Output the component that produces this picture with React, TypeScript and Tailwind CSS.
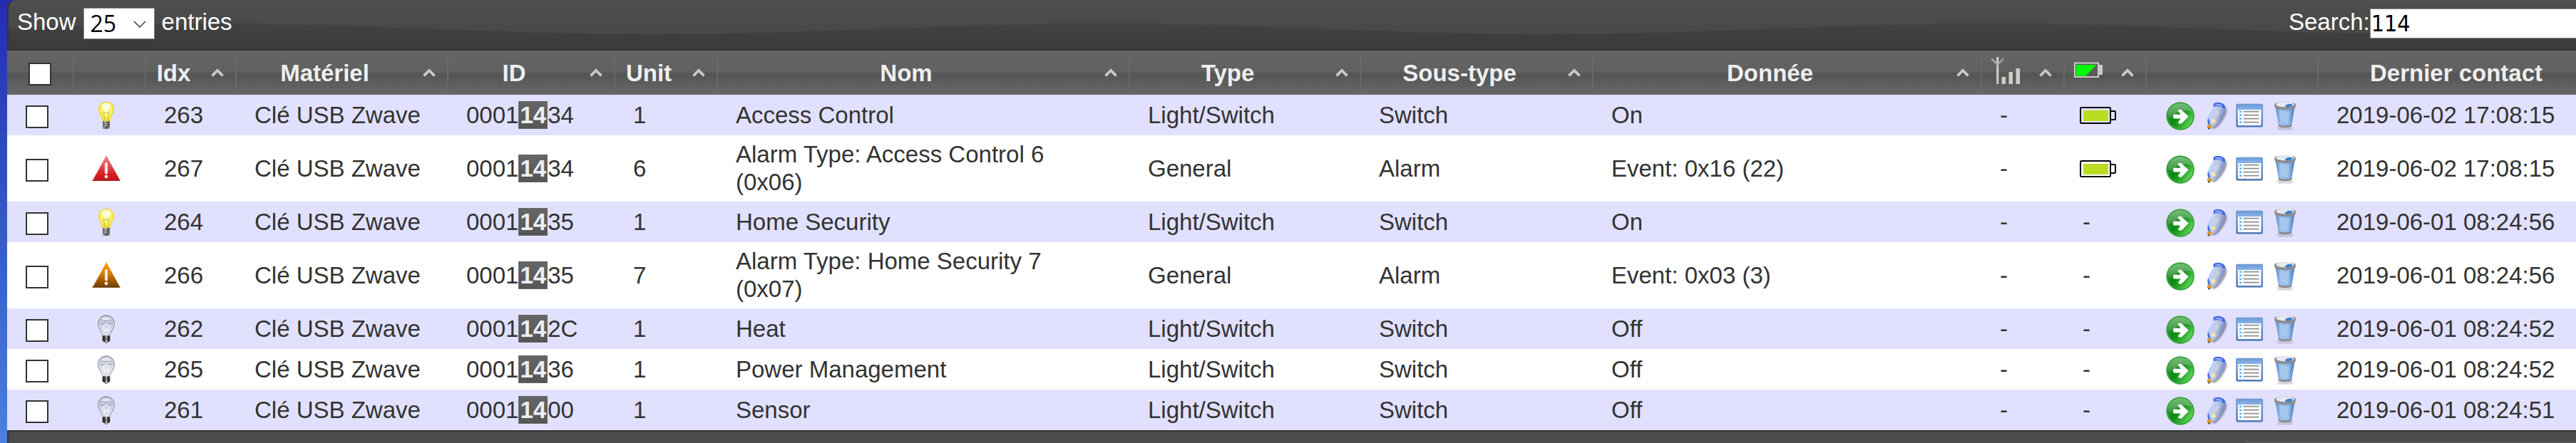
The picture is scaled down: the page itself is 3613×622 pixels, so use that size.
import type { ReactNode } from "react";

type Kind = "on" | "off" | "red" | "orange";

interface Device {
  idx: number;
  kind: Kind;
  tail: string;
  unit: number;
  name: string;
  type: string;
  subtype: string;
  data: string;
  battery: boolean;
  seen: string;
}

const devices: Device[] = [
  { idx: 263, kind: "on", tail: "34", unit: 1, name: "Access Control", type: "Light/Switch", subtype: "Switch", data: "On", battery: true, seen: "2019-06-02 17:08:15" },
  { idx: 267, kind: "red", tail: "34", unit: 6, name: "Alarm Type: Access Control 6 (0x06)", type: "General", subtype: "Alarm", data: "Event: 0x16 (22)", battery: true, seen: "2019-06-02 17:08:15" },
  { idx: 264, kind: "on", tail: "35", unit: 1, name: "Home Security", type: "Light/Switch", subtype: "Switch", data: "On", battery: false, seen: "2019-06-01 08:24:56" },
  { idx: 266, kind: "orange", tail: "35", unit: 7, name: "Alarm Type: Home Security 7 (0x07)", type: "General", subtype: "Alarm", data: "Event: 0x03 (3)", battery: false, seen: "2019-06-01 08:24:56" },
  { idx: 262, kind: "off", tail: "2C", unit: 1, name: "Heat", type: "Light/Switch", subtype: "Switch", data: "Off", battery: false, seen: "2019-06-01 08:24:52" },
  { idx: 265, kind: "off", tail: "36", unit: 1, name: "Power Management", type: "Light/Switch", subtype: "Switch", data: "Off", battery: false, seen: "2019-06-01 08:24:52" },
  { idx: 261, kind: "off", tail: "00", unit: 1, name: "Sensor", type: "Light/Switch", subtype: "Switch", data: "Off", battery: false, seen: "2019-06-01 08:24:51" },
];

/* Gradients shared by all icons */
function Defs() {
  return (
    <svg width="0" height="0" className="absolute" aria-hidden="true">
      <defs>
        <radialGradient id="bulbOn" cx="0.5" cy="0.42" r="0.6">
          <stop offset="0" stopColor="#fffde0" />
          <stop offset="0.45" stopColor="#fdf66e" />
          <stop offset="1" stopColor="#f0dc14" />
        </radialGradient>
        <linearGradient id="bulbOff" x1="0" y1="0" x2="0" y2="1">
          <stop offset="0" stopColor="#8f96a6" stopOpacity="0.75" />
          <stop offset="0.35" stopColor="#b4bac8" stopOpacity="0.6" />
          <stop offset="1" stopColor="#e6e8f0" stopOpacity="0.6" />
        </linearGradient>
        <linearGradient id="metal" x1="0" y1="0" x2="1" y2="0">
          <stop offset="0" stopColor="#555" />
          <stop offset="0.4" stopColor="#e0e0e0" />
          <stop offset="0.7" stopColor="#777" />
          <stop offset="1" stopColor="#444" />
        </linearGradient>
        <linearGradient id="darkMetal" x1="0" y1="0" x2="1" y2="0">
          <stop offset="0" stopColor="#1c1c1c" />
          <stop offset="0.3" stopColor="#3a3a3a" />
          <stop offset="0.55" stopColor="#d8d0c8" />
          <stop offset="0.75" stopColor="#222" />
          <stop offset="1" stopColor="#333" />
        </linearGradient>
        <linearGradient id="warnRed" x1="0" y1="0" x2="0" y2="1">
          <stop offset="0" stopColor="#f08a8a" />
          <stop offset="0.5" stopColor="#e0404a" />
          <stop offset="0.8" stopColor="#d8181c" />
          <stop offset="1" stopColor="#b81a20" />
        </linearGradient>
        <linearGradient id="warnOrange" x1="0" y1="0" x2="0" y2="1">
          <stop offset="0" stopColor="#ff9d0a" />
          <stop offset="0.35" stopColor="#e88400" />
          <stop offset="1" stopColor="#6e3e00" />
        </linearGradient>
        <linearGradient id="goBase" x1="0" y1="0.2" x2="1" y2="0.9">
          <stop offset="0" stopColor="#2f9a3a" />
          <stop offset="0.4" stopColor="#0a8a12" />
          <stop offset="0.7" stopColor="#35b035" />
          <stop offset="1" stopColor="#7cf06c" />
        </linearGradient>
        <linearGradient id="goGloss" x1="0" y1="0" x2="0" y2="1">
          <stop offset="0" stopColor="#8fc88f" stopOpacity="0.8" />
          <stop offset="1" stopColor="#4e9a54" stopOpacity="0.75" />
        </linearGradient>
        <linearGradient id="penBody" x1="0" y1="0" x2="1" y2="0.5">
          <stop offset="0" stopColor="#6f9bec" />
          <stop offset="0.35" stopColor="#c0d6fa" />
          <stop offset="0.65" stopColor="#b2bed8" />
          <stop offset="1" stopColor="#5a7cd4" />
        </linearGradient>
        <linearGradient id="listBar" x1="0" y1="0" x2="0" y2="1">
          <stop offset="0" stopColor="#6a9ad4" />
          <stop offset="0.2" stopColor="#86b0e4" />
          <stop offset="1" stopColor="#5578b4" />
        </linearGradient>
        <linearGradient id="binBody" x1="0" y1="0" x2="1" y2="0">
          <stop offset="0" stopColor="#4a86cc" />
          <stop offset="0.25" stopColor="#9fc2ea" />
          <stop offset="0.7" stopColor="#8fb6e4" />
          <stop offset="1" stopColor="#3a76c2" />
        </linearGradient>
        <filter id="soft" x="-20%" y="-20%" width="140%" height="140%">
          <feGaussianBlur stdDeviation="1.3" />
        </filter>
      </defs>
    </svg>
  );
}

function BulbOn() {
  return (
    <svg viewBox="0 0 40 40" className="block size-10" aria-hidden="true">
      <ellipse cx="20" cy="37.4" rx="5.5" ry="1.8" fill="#666" opacity="0.6" />
      <path d="M20 1.3C13.6 1.3 9.4 5.8 9.4 11.6c0 4.5 2.4 7.2 4 10.4 1.1 2.2 1.2 4.4 1.8 6.2h9.6c.6-1.8.7-4 1.8-6.2 1.6-3.2 4-5.9 4-10.4C30.600 5.8 26.400 1.300 20 1.300Z" fill="url(#bulbOn)" stroke="#e2d024" strokeWidth="0.8" />
      <ellipse cx="20" cy="7.500" rx="7" ry="4.800" fill="#fffef0" opacity="0.75" />
      <path d="M18.300 28 16 14.500l2.400 3 1.600-2.500 1.600 2.500 2.400-3L21.700 28" fill="none" stroke="#b8b04a" strokeWidth="0.8" />
      <path d="M15.200 28h9.600v7.200l-2.300 2.500h-5l-2.300-2.500Z" fill="url(#metal)" />
      <path d="M15 30.300h10M15 32.800h10M15.500 35.200h9" stroke="#555" strokeWidth="1" />
      <path d="M17.500 36.500h5l-1 1.800h-3Z" fill="#333" />
    </svg>
  );
}

function BulbOff() {
  return (
    <svg viewBox="0 0 40 40" className="block size-10" aria-hidden="true">
      <path d="M20 .8C13 .8 8.500 6 8.500 12.500c0 6 3.800 9.500 5.600 13.500.6 1.400.9 2.400 1 3.500h9.800c.1-1.100.4-2.100 1-3.500 1.800-4 5.600-7.500 5.600-13.500C31.500 6 27 .8 20 .8Z" fill="url(#bulbOff)" stroke="#8b91a0" strokeWidth="1" />
      <path d="M13 5.500C17 1.800 24 2 27.500 6c-3 1.500-5 .5-7 2-3 .5-5-.5-7.500-2.500Z" fill="#fff" opacity="0.6" />
      <path d="M11 12c5 1.800 12 1.800 18.500-.5M16 8.500h6" stroke="#777e90" strokeWidth="0.9" opacity="0.7" fill="none" />
      <path d="M18.300 27.500 16.300 15l3.700-2 3.700 2-2 12.500M18 21h4" fill="none" stroke="#f8f8ff" strokeWidth="1.300" />
      <path d="M18 25h4.500v4H18Z" fill="#f4f4fa" stroke="#999" strokeWidth="0.500" />
      <path d="M14.700 29.500h10.600v7l-2 1.500h-6.600l-2-1.500Z" fill="url(#darkMetal)" />
      <path d="M15 32.300l10-.5M15 34.800l10-.5" stroke="#333" strokeWidth="0.700" />
      <path d="M17 38h6l-1.500 2h-3Z" fill="#999" />
    </svg>
  );
}

function Warning({ tone }: { tone: "red" | "orange" }) {
  const red = tone === "red";
  return (
    <svg viewBox="0 0 40 40" className="block size-10" aria-hidden="true">
      <path d="M20 1 39.500 36.500H.5Z" fill={red ? "url(#warnRed)" : "url(#warnOrange)"} />
      <path d="M.5 36.500h39" stroke={red ? "#a01820" : "#7a5020"} strokeWidth="1" />
      <path d="M19.500 2.500 1.500 35.500" stroke="#fff" strokeWidth="0.900" opacity="0.45" />
      <rect x="18.200" y="11.500" width="3.600" height="15.500" rx="1" fill="#fff" stroke={red ? "#f4b0b0" : "#e0c090"} strokeWidth="1" />
      <circle cx="20" cy="31" r="2.200" fill="#fff" stroke={red ? "#f4b0b0" : "#e0c090"} strokeWidth="0.700" />
    </svg>
  );
}

function Go() {
  return (
    <svg viewBox="0 0 40 40" className="block size-10" aria-hidden="true">
      <circle cx="20" cy="20" r="19.800" fill="#3da542" />
      <circle cx="20" cy="20" r="17.800" fill="url(#goBase)" />
      <path d="M2.500 21C2 10 10 2.200 20 2.200c9 0 15.500 5 17 12C27 11 20 12 14 17c-4 3-7 4-11.500 4Z" fill="url(#goGloss)" />
      <path d="M11 17.800h9.500l-4-5.500c1.500-1.800 3.500-2 5.500-.8l9.500 9-9.500 9.800c-2 .8-4 .3-5.200-1.200l3.700-5.600H11c-1.500-1.700-1.500-4 0-5.700Z" fill="#fff" />
    </svg>
  );
}

function Pen() {
  return (
    <svg viewBox="0 0 40 40" className="block size-10" aria-hidden="true">
      <path d="M32 6c6 3 5 9 1 16-3 6-9 14-15 16l-3-2Z" fill="#555a70" opacity="0.6" filter="url(#soft)" />
      <path d="M17 3.500c3-3.800 12-3 16.500 1.500 2 4-.5 8-2.500 12-2.500 5-4 9.500-9.500 15.500l-8 5-4-9.500c0-8 4.500-14.500 7-18.500Z" fill="url(#penBody)" />
      <path d="M17.500 3c3-3 11-3.500 15.500 1.500 1 2 1 3.500 0 5.500-4-3.500-9.500-4.500-15-3Z" fill="#4468e0" />
      <path d="M20 3.500c4-1.500 7-1 10 1.500l-1 2c-3-1.500-6-2-9-1.500Z" fill="#88acf6" />
      <path d="M22 12c3 0 4 2 2.500 5-2 4-5 7.500-7.500 8.500-1-3 2.500-10.500 5-13.500Z" fill="#ccd0dc" />
      <path d="M10 22c-1 4-1 6 0 9l3 2c0-4-1-6-3-11Z" fill="#4a6ee4" />
      <circle cx="17.300" cy="27" r="3" fill="#fbe6a8" />
      <path d="M9.500 31.500c2 0 5 1.500 6.500 3.500l-4 3-3.500-2Z" fill="#dd9a2c" />
      <path d="M9.500 35.500l1 3.500 3-1.500Z" fill="#555" />
    </svg>
  );
}

function List() {
  return (
    <svg viewBox="0 0 40 40" className="block size-10" aria-hidden="true">
      <rect x="0.500" y="3.200" width="37" height="32" rx="1.500" fill="url(#listBar)" stroke="#5a86c4" strokeWidth="0.800" />
      <rect x="2.800" y="11" width="32.500" height="22" fill="#fff" />
      <path d="M10.500 13.700h22M10.500 18.700h22M10.500 23.700h22M10.500 28.700h22" stroke="#909090" strokeWidth="1.700" />
      <path d="M5 13.700h3M5 18.700h3M5 23.700h3M5 28.700h3" stroke="#5ab4f8" strokeWidth="2.600" />
    </svg>
  );
}

function Bin() {
  return (
    <svg viewBox="0 0 40 40" className="block size-10" aria-hidden="true">
      <path d="M9 34h22l-1 6H10Z" fill="#8a8a98" opacity="0.35" filter="url(#soft)" />
      <path d="M6.500 7h27L29 34c-3 2.300-15 2.300-18 0Z" fill="url(#binBody)" />
      <path d="M13 13l2 17 9 1 2-17Z" fill="#b0cef0" opacity="0.55" />
      <path d="M10.600 31.500c4 2.500 14.800 2.500 18.800 0l-.6 3c-3.500 2.200-14.100 2.200-17.600 0Z" fill="#8a8a8a" />
      <path d="M5.200 3C8 -.5 32 -.5 34.800 3v4c-3 4-26.600 4-29.600 0Z" fill="#8c8c8c" />
      <ellipse cx="20" cy="3.800" rx="12.500" ry="3.600" fill="#e8eaee" />
      <path d="M20 5.500c3-3 7-3.500 11-1.500-1 2.500-6 4-11 3.500Z" fill="#3c82d0" />
      <path d="M6 6.500c3 3 25 3 28 0v2.500c-3 3-25 3-28 0Z" fill="#8c9098" />
    </svg>
  );
}

function Battery() {
  return (
    <svg viewBox="0 0 52 26" className="-ml-1 block h-[26px] w-[52px]" role="img" aria-label="Battery level">
      <rect x="1" y="2" width="42" height="22" rx="1.500" fill="none" stroke="#000" strokeWidth="2" />
      <path d="M43 7h5.500c1 0 1.500.5 1.500 1.500v9c0 1-.5 1.500-1.500 1.500H43" fill="none" stroke="#000" strokeWidth="2" />
      <rect x="5" y="6" width="35" height="15" fill="#b9dc22" />
    </svg>
  );
}

function SignalHeader() {
  return (
    <svg viewBox="0 0 40 40" className="mb-[6px] block size-10" role="img" aria-label="Signal">
      <path d="M8.700 1v38" stroke="#c8c8c8" strokeWidth="3.200" />
      <path d="M0 3.500 8.700 11.500 17 3.500" fill="none" stroke="#a8a8a8" strokeWidth="2.400" />
      <path d="M14.500 29h5.500v10h-5.500ZM24.500 22h5.500v17h-5.500ZM34.500 17h5.500v22h-5.500Z" fill="#cdcdc8" />
    </svg>
  );
}

function BatteryHeader() {
  return (
    <svg viewBox="0 0 40 40" className="mb-[6px] block size-10" role="img" aria-label="Battery">
      <rect x="1" y="9.500" width="33" height="19.500" fill="#5c5c5c" stroke="#c8ccc8" strokeWidth="2" />
      <path d="M3 12h28.500L16.500 27.500H3Z" fill="#0f0" />
      <path d="M35 12h5v14h-5Z" fill="#c8ccc8" />
    </svg>
  );
}

function Caret() {
  return (
    <svg viewBox="0 0 18 12" className="mr-4 block h-3 w-[18px] shrink-0" aria-hidden="true">
      <path d="M1.500 10.300 9 3l7.500 7.300" fill="none" stroke="#c8c8c8" strokeWidth="3.800" />
    </svg>
  );
}

function Wave() {
  return (
    <svg className="absolute inset-0 size-full" aria-hidden="true">
      <defs>
        <linearGradient id="waveDark" x1="0" y1="0" x2="0" y2="1">
          <stop offset="0" stopColor="#424242" />
          <stop offset="1" stopColor="#3a3a3a" />
        </linearGradient>
        <pattern id="wave" x="282" y="0" width="1250" height="70" patternUnits="userSpaceOnUse">
          <path d="M0 33C220 33 400 47.500 625 47.500S1030 33 1250 33V70H0Z" fill="url(#waveDark)" />
        </pattern>
      </defs>
      <rect width="100%" height="100%" fill="url(#wave)" />
    </svg>
  );
}

const boxClass =
  "block size-8 shrink-0 appearance-none border-2 border-[#333] bg-white checked:bg-[#333]";

function Head({ label, children }: { label?: string; children?: ReactNode }) {
  return (
    <th scope="col" className="p-0 font-bold">
      <button type="button" className="my-[3px] flex h-14 w-full items-center border-r-2 border-[#696969] font-bold">
        <span className="flex flex-1 justify-center">{label ?? children}</span>
        <span className="w-[14px] shrink-0" />
        <Caret />
      </button>
    </th>
  );
}

function StateIcon({ kind }: { kind: Kind }) {
  if (kind === "on") return <BulbOn />;
  if (kind === "off") return <BulbOff />;
  return <Warning tone={kind} />;
}

function Action({ label, children }: { label: string; children: ReactNode }) {
  return (
    <button type="button" aria-label={label} className="block">
      {children}
    </button>
  );
}

export default function App() {
  return (
    <div className="flex h-screen flex-col overflow-hidden bg-linear-to-b from-[#242cae] to-[#4a80e0] pl-[10px] font-['Liberation_Sans',Arial,sans-serif] text-[33px] leading-[39px] text-[#333]">
      <Defs />
      <div className="relative flex shrink-0 items-start justify-between overflow-hidden rounded-tl-[12px] border-b-2 border-l-2 border-[#333] bg-linear-to-b from-[#4f4f4f] to-[#494949] to-50% pt-[11px] pb-[14px] text-white">
        <Wave />
        <label className="relative flex items-start gap-[10px] pl-3">
          <span>Show</span>
          <span className="relative">
            <select
              defaultValue="25"
              className="block h-11 w-[100px] appearance-none rounded-none border border-[#8a8a8a] bg-white pl-[9px] font-['Open_Sans',sans-serif] text-[32px] leading-[42px] text-black"
            >
              <option>10</option>
              <option>25</option>
              <option>50</option>
              <option>100</option>
            </select>
            <svg viewBox="0 0 18 10" className="pointer-events-none absolute top-[18px] right-3 h-[10px] w-[18px]" aria-hidden="true">
              <path d="M1 1l8 8 8-8" fill="none" stroke="#333" strokeWidth="1.400" />
            </svg>
          </span>
          <span>entries</span>
        </label>
        <label className="relative flex w-[403px] items-start">
          <span>Search:</span>
          <input
            type="text"
            defaultValue="114"
            className="mt-px block h-[42px] min-w-0 flex-1 border border-r-0 border-[#8a8a8a] bg-white px-px font-['DejaVu_Sans_Condensed','DejaVu_Sans',sans-serif] text-[32px] leading-[40px] text-black"
          />
        </label>
      </div>

      <table className="w-full shrink-0 table-fixed border-collapse">
        <colgroup>
          <col className="w-[94px]" />
          <col className="w-[101px]" />
          <col className="w-[127px]" />
          <col className="w-[297px]" />
          <col className="w-[234px]" />
          <col className="w-[144px]" />
          <col className="w-[578px]" />
          <col className="w-[324px]" />
          <col className="w-[326px]" />
          <col className="w-[545px]" />
          <col className="w-[116px]" />
          <col className="w-[115px]" />
          <col className="w-[241px]" />
          <col />
        </colgroup>
        <thead>
          <tr className="h-[62px] bg-[linear-gradient(#6a6a6a_0px,#646464_3px,#616161_30px,#545454_32px,#686868_62px)] text-[#eee]">
            <th scope="col" className="p-0">
              <div className="my-[3px] flex h-14 items-center justify-center border-r-2 border-[#696969] pt-1">
                <input type="checkbox" aria-label="Select all" className={boxClass} />
              </div>
            </th>
            <th scope="col" className="p-0">
              <div className="my-[3px] h-14 border-r-2 border-[#696969]" />
            </th>
            <Head label="Idx" />
            <Head label="Matériel" />
            <Head label="ID" />
            <Head label="Unit" />
            <Head label="Nom" />
            <Head label="Type" />
            <Head label="Sous-type" />
            <Head label="Donnée" />
            <Head>
              <SignalHeader />
            </Head>
            <Head>
              <BatteryHeader />
            </Head>
            <th scope="col" className="p-0">
              <div className="my-[3px] h-14 border-r-2 border-[#696969]" />
            </th>
            <th scope="col" className="p-0 pl-[25px] font-bold">
              Dernier contact
            </th>
          </tr>
        </thead>
        <tbody>
          {devices.map((d) => (
            <tr key={d.idx} className="h-[57px] odd:bg-[#e1e1ff] even:bg-white">
              <td className="p-0 pt-[5px] pl-[26px]">
                <input type="checkbox" aria-label={`Select ${d.idx}`} className={boxClass} />
              </td>
              <td className="p-0 pl-[25px]">
                <StateIcon kind={d.kind} />
              </td>
              <td className="p-0 pl-[25px]">{d.idx}</td>
              <td className="p-0 pl-[25px]">Clé USB Zwave</td>
              <td className="p-0 pl-[25px]">
                0001
                <b className="border border-[#696969] bg-linear-to-b from-[#666] to-[#555] px-px text-[#eee]">14</b>
                {d.tail}
              </td>
              <td className="p-0 pl-[25px]">{d.unit}</td>
              <td className="px-[25px] pt-[7px] pb-2">{d.name}</td>
              <td className="p-0 pl-[25px]">{d.type}</td>
              <td className="p-0 pl-[25px]">{d.subtype}</td>
              <td className="p-0 pl-[25px]">{d.data}</td>
              <td className="p-0 pl-[25px]">-</td>
              <td className="p-0 pl-[25px]">{d.battery ? <Battery /> : "-"}</td>
              <td className="p-0 pt-[2px] pl-[27px]">
                <div className="flex gap-[9px]">
                  <Action label="Open"><Go /></Action>
                  <Action label="Rename"><Pen /></Action>
                  <Action label="Log"><List /></Action>
                  <Action label="Delete"><Bin /></Action>
                </div>
              </td>
              <td className="p-0 pl-[25px] whitespace-nowrap">{d.seen}</td>
            </tr>
          ))}
        </tbody>
      </table>

      <div className="flex flex-1 items-start justify-end border-t-2 border-l-2 border-[#333] bg-[#4b4b4b] pt-[13px]">
        <div className="h-12 w-[463px] bg-[#545454]" />
      </div>
    </div>
  );
}
